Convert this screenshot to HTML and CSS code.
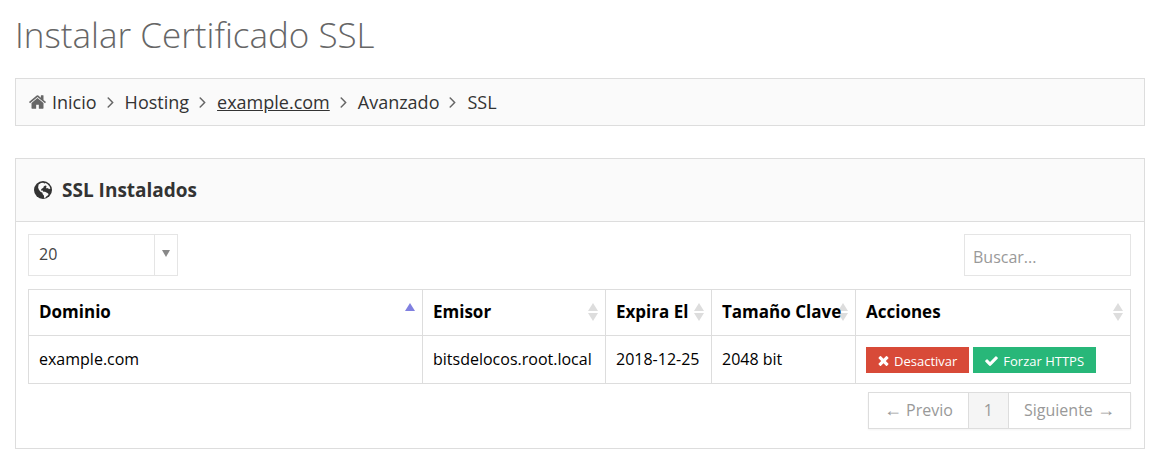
FILE: index.html
```html
<!DOCTYPE html>
<html lang="es">
<head>
<meta charset="utf-8">
<meta name="viewport" content="width=device-width, initial-scale=1">
<title>Instalar Certificado SSL</title>
<link rel="stylesheet" href="styles.css">
</head>
<body>
<svg class="sprite" aria-hidden="true">
  <symbol id="angle" viewBox="595 444 576 1032"><path d="M1171 960q0 13-10 23l-466 466q-10 10-23 10t-23-10l-50-50q-10-10-10-23t10-23l393-393-393-393q-10-10-10-23t10-23l50-50q10-10 23-10t23 10l466 466q10 10 10 23z"/></symbol>
  <symbol id="sort" viewBox="0 0 10 18"><path d="M5 0l5 8H0zM0 10h10l-5 8z"/></symbol>
</svg>
<main class="page">
  <h1 class="title">Instalar Certificado SSL</h1>
  <nav class="breadcrumb" aria-label="Ruta">
    <svg class="home" viewBox="80 256 1632 1280" aria-hidden="true"><path d="M1472 992v480q0 26-19 45t-45 19h-384v-384h-256v384h-384q-26 0-45-19t-19-45v-480q0-1 .5-3t.5-3l575-474 575 474q1 2 1 6zm223-69l-62 74q-8 9-21 11h-3q-13 0-21-7l-692-577-692 577q-12 8-24 7-13-2-21-11l-62-74q-8-10-7-23.5t11-21.5l719-599q32-26 76-26t76 26l244 204v-195q0-14 9-23t23-9h192q14 0 23 9t9 23v408l219 182q10 8 11 21.5t-7 23.5z"/></svg>
    <a href="#">Inicio</a>
    <svg class="angle" aria-hidden="true"><use href="#angle"/></svg>
    <a href="#">Hosting</a>
    <svg class="angle" aria-hidden="true"><use href="#angle"/></svg>
    <a class="current-domain" href="#">example.com</a>
    <svg class="angle" aria-hidden="true"><use href="#angle"/></svg>
    <a href="#">Avanzado</a>
    <svg class="angle" aria-hidden="true"><use href="#angle"/></svg>
    <a href="#">SSL</a>
  </nav>
  <section class="panel">
    <header class="panel-head">
      <svg class="globe" viewBox="0 0 18 18" aria-hidden="true">
        <circle cx="9" cy="9" r="9"/>
        <path class="land" d="M4.6 3.6L7 2l2.2-.3 1.2.9 1.3-.5 1.9 1.2 1.9 2 .9 2.3-1.4.6-1.1-1.1-1.2.5-.7-1.3.7-1.2-1.5-.6-1.5 1.1-.3 1.2-1.7.9-.8 1.2.9.8 1.1-.2.3 1.3 1.8-.1 2.4 1.3 1.2.9-.6 1.4-1.5 1-1.2 1.5-1.1.1-.3-2.4-1.3-1.6-.1-1.2-2-.9-1.6-2.1-.8-2.2z"/>
      </svg>
      <h2 class="panel-title">SSL Instalados</h2>
    </header>
    <div class="panel-body">
      <div class="toolbar">
        <div class="length">
          <select class="length-select" aria-label="Registros por página"><option>20</option></select>
          <span class="length-arrow"><svg viewBox="0 0 8 7" aria-hidden="true"><path d="M0 0h8L4 7z"/></svg></span>
        </div>
        <input class="search" type="search" placeholder="Buscar..." aria-label="Buscar">
      </div>
      <table class="certs">
        <colgroup><col><col class="c-issuer"><col class="c-expiry"><col class="c-key"><col class="c-actions"></colgroup>
        <thead>
          <tr>
            <th>Dominio<svg class="sort asc" viewBox="0 0 10 18" aria-hidden="true"><path d="M5 0l5 8H0z"/></svg></th>
            <th>Emisor<svg class="sort" aria-hidden="true"><use href="#sort"/></svg></th>
            <th>Expira El<svg class="sort" aria-hidden="true"><use href="#sort"/></svg></th>
            <th><span class="label">Tamaño Clave</span><svg class="sort" aria-hidden="true"><use href="#sort"/></svg></th>
            <th>Acciones<svg class="sort" aria-hidden="true"><use href="#sort"/></svg></th>
          </tr>
        </thead>
        <tbody>
          <tr>
            <td>example.com</td>
            <td>bitsdelocos.root.local</td>
            <td>2018-12-25</td>
            <td>2048 bit</td>
            <td>
              <div class="actions">
                <button class="btn red" type="button"><svg class="cross" viewBox="302 366 1188 1188" aria-hidden="true"><path d="M1490 1322q0 40-28 68l-136 136q-28 28-68 28t-68-28l-294-294-294 294q-28 28-68 28t-68-28l-136-136q-28-28-28-68t28-68l294-294-294-294q-28-28-28-68t28-68l136-136q28-28 68-28t68 28l294 294 294-294q28-28 68-28t68 28l136 136q28 28 28 68t-28 68l-294 294 294 294q28 28 28 68z"/></svg>Desactivar</button>
                <button class="btn green" type="button"><svg class="check" viewBox="121 300 1550 1222" aria-hidden="true"><path d="M1671 566q0 40-28 68l-724 724-136 136q-28 28-68 28t-68-28l-136-136-362-362q-28-28-28-68t28-68l136-136q28-28 68-28t68 28l294 295 656-657q28-28 68-28t68 28l136 136q28 28 28 68z"/></svg>Forzar HTTPS</button>
              </div>
            </td>
          </tr>
        </tbody>
      </table>
      <nav class="pager" aria-label="Paginación">
        <a href="#"><span class="arrow">←</span> Previo</a>
        <a class="active" href="#" aria-current="page">1</a>
        <a href="#">Siguiente <span class="arrow">→</span></a>
      </nav>
    </div>
  </section>
</main>
</body>
</html>
```
FILE: styles.css
```css
* { box-sizing: border-box; }

body {
  margin: 0;
  background: #fff;
  color: #000;
  font: 16px/24px "Open Sans", sans-serif;
}

a { color: inherit; text-decoration: none; }
button, input, select { font: inherit; }
svg { fill: currentColor; flex: none; }

.sprite { display: none; }
.page { padding: 10px 14px 15px 15px; }

.title {
  margin: 0 0 18px;
  color: #666;
  font-size: 35px;
  font-weight: 300;
  line-height: 50px;
}

.breadcrumb {
  display: flex;
  align-items: center;
  height: 48px;
  margin-bottom: 32px;
  padding: 0 13px;
  border: 1px solid #ddd;
  background: #fafafa;
  color: #333;
  font-size: 18px;
}
.home { width: 17px; height: 14px; margin-right: 6px; color: #666; }
.angle { width: 7px; height: 11px; margin: 1px 11px 0 10px; color: #666; }
.current-domain { text-decoration: underline; }

.panel { border: 1px solid #ddd; }
.panel-head {
  display: flex;
  align-items: center;
  gap: 10px;
  height: 63px;
  padding: 0 18px;
  border-bottom: 1px solid #ddd;
  background: #fafafa;
  color: #333;
}
.globe { width: 18px; height: 18px; }
.land { fill: #fafafa; }
.panel-title { margin: 0; font-size: 19px; font-weight: 700; }

.panel-body { padding: 12px 13px 19px 12px; }
.toolbar { display: flex; justify-content: space-between; margin-bottom: 13px; }
.length { position: relative; width: 150px; }
.length-select {
  appearance: none;
  width: 100%;
  height: 42px;
  padding: 0 34px 2px 10px;
  border: 1px solid #e5e5e5;
  border-radius: 0;
  background: #fff;
  color: #444;
}
.length-arrow {
  position: absolute;
  inset: 0 0 0 auto;
  display: grid;
  place-items: center;
  width: 24px;
  padding: 0 2px 4px 0;
  border-left: 1px solid #e5e5e5;
  color: #888;
  pointer-events: none;
}
.length-arrow svg { width: 8px; height: 7px; }
.search {
  width: 167px;
  height: 42px;
  padding: 4px 8px 0;
  border: 1px solid #e5e5e5;
  border-radius: 0;
  appearance: none;
}
.search::placeholder { color: #999; }

.certs { width: 100%; table-layout: fixed; border-collapse: collapse; }
.c-issuer { width: 183px; }
.c-expiry { width: 106px; }
.c-key { width: 144px; }
.c-actions { width: 275px; }
.certs th, .certs td {
  position: relative;
  padding: 0 10px 2px;
  border: 1px solid #ddd;
  text-align: left;
  white-space: nowrap;
}
.certs th { height: 46px; font-size: 17px; font-weight: 700; }
.certs td { height: 48px; }
.label { position: relative; z-index: 1; }
.sort {
  position: absolute;
  top: 13px;
  right: 7px;
  width: 10px;
  height: 18px;
  color: #ddd;
}
.sort.asc { color: #8080e0; }

.actions { display: flex; gap: 4px; padding-top: 2px; }
.btn {
  display: flex;
  align-items: center;
  height: 26px;
  padding: 2px 12px 0;
  border: 0;
  color: #fff;
  font-size: 13px;
  line-height: 18px;
}
.red { background: #d84a38; }
.green { background: #28b779; }
.cross { width: 11px; height: 10px; margin-right: 5px; }
.check { width: 13px; height: 10px; margin-right: 5px; }

.pager {
  display: flex;
  width: max-content;
  margin: 8px 0 0 auto;
  border: 1px solid #ddd;
  box-shadow: 0 1px 2px rgba(0, 0, 0, .05);
  color: #999;
}
.pager a { padding: 5px 15px 6px; }
.pager a + a { border-left: 1px solid #ddd; }
.pager .active { background: #f5f5f5; }
.arrow { font: 18px/1 "Liberation Sans", sans-serif; }
```
